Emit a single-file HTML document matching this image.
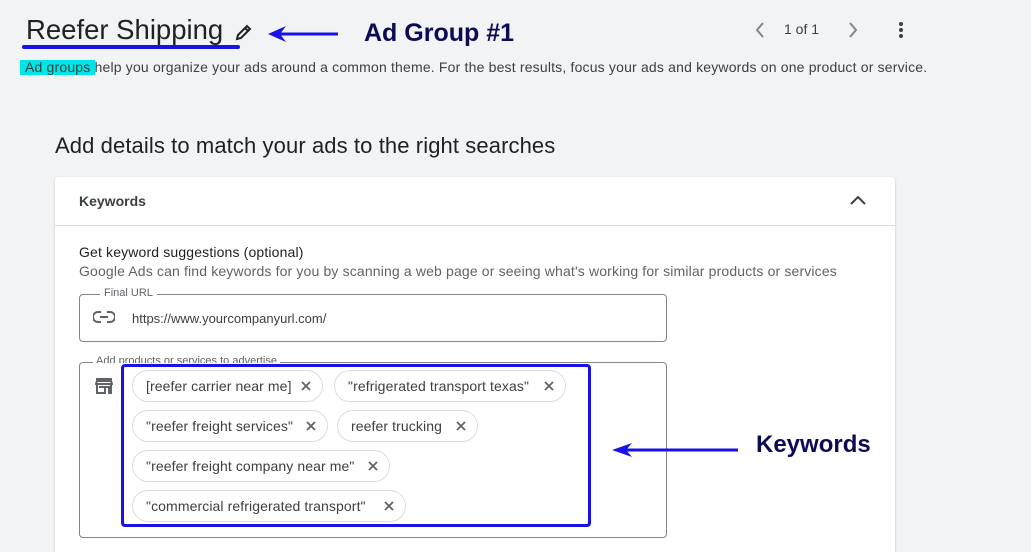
<!DOCTYPE html>
<html><head><style>
*{margin:0;padding:0;box-sizing:border-box}
html,body{width:1031px;height:552px;overflow:hidden}
body{background:#f1f3f4;font-family:"Liberation Sans",Arial,sans-serif;position:relative;color:#3c4043}
.a{position:absolute;white-space:nowrap}
.chip{position:absolute;height:32px;border:1px solid #dadce0;border-radius:16px;background:#fff;font-size:14px;color:#3c4043;line-height:30px;padding-left:13px;letter-spacing:.1px}
.chip .x{position:absolute;right:9px;top:8px;width:14px;height:14px}
</style></head><body>
<div class="a" style="left:26px;top:14px;font-size:27.5px;color:#202124">Reefer Shipping</div>
<div class="a" style="left:22px;top:45px;width:218px;height:4px;background:#1a10e8;border-radius:2px"></div>
<svg class="a" style="left:234px;top:22px" width="20" height="20" viewBox="0 0 20 20"><path d="M3 17 L4 13 L13 4 L16 7 L7 16 Z M11 6 L14 9" fill="none" stroke="#202124" stroke-width="2"/></svg>
<svg class="a" style="left:266px;top:24px" width="74" height="20" viewBox="0 0 74 20"><path d="M72 10 H12" stroke="#1a10e8" stroke-width="3"/><path d="M2 10 L20 2 L14 10 L20 18 Z" fill="#1a10e8"/></svg>
<div class="a" style="left:364px;top:19px;font-size:25px;font-weight:bold;color:#0c0c55">Ad Group #1</div>
<div class="a" style="left:20px;top:60px;width:75px;height:15px;background:#00e5e5"></div>
<div class="a" style="left:25px;top:59px;font-size:14px;letter-spacing:.18px;color:#3c4043">Ad groups help you organize your ads around a common theme. For the best results, focus your ads and keywords on one product or service.</div>
<svg class="a" style="left:753px;top:21px" width="14" height="18"><path d="M10 2 L4 9 L10 16" fill="none" stroke="#80868b" stroke-width="2"/></svg>
<div class="a" style="left:784px;top:21px;font-size:14px">1 of 1</div>
<svg class="a" style="left:846px;top:21px" width="14" height="18"><path d="M4 2 L10 9 L4 16" fill="none" stroke="#80868b" stroke-width="2"/></svg>
<svg class="a" style="left:896px;top:21px" width="10" height="18"><circle cx="5" cy="3" r="2" fill="#3c4043"/><circle cx="5" cy="9" r="2" fill="#3c4043"/><circle cx="5" cy="15" r="2" fill="#3c4043"/></svg>
<div class="a" style="left:55px;top:133px;font-size:22px;letter-spacing:.1px;color:#202124">Add details to match your ads to the right searches</div>
<div class="a" style="left:55px;top:177px;width:840px;height:380px;background:#fff;border-radius:4px;box-shadow:0 1px 2px rgba(60,64,67,.3)"></div>
<div class="a" style="left:79px;top:193px;font-size:14px;font-weight:bold;color:#3c4043">Keywords</div>
<svg class="a" style="left:849px;top:193px" width="18" height="14"><path d="M2 11 L9 4 L16 11" fill="none" stroke="#3c4043" stroke-width="2"/></svg>
<div class="a" style="left:55px;top:225px;width:840px;height:1px;background:#dadce0"></div>
<div class="a" style="left:79px;top:244px;font-size:14px;letter-spacing:.15px;color:#202124">Get keyword suggestions (optional)</div>
<div class="a" style="left:79px;top:263px;font-size:14px;letter-spacing:.15px;color:#5f6368">Google Ads can find keywords for you by scanning a web page or seeing what's working for similar products or services</div>
<div class="a" style="left:79px;top:294px;width:588px;height:48px;border:1px solid #80868b;border-radius:4px"></div>
<div class="a" style="left:100px;top:287px;font-size:11px;background:#fff;padding:0 4px;color:#5f6368">Final URL</div>
<svg class="a" style="left:93px;top:311px" width="22" height="12"><path d="M8 1 H5 A5 5 0 0 0 5 11 H8 M14 1 H17 A5 5 0 0 1 17 11 H14 M7 6 H15" fill="none" stroke="#5f6368" stroke-width="2"/></svg>
<div class="a" style="left:132px;top:311px;font-size:13px;color:#3c4043">https://www.yourcompanyurl.com/</div>
<div class="a" style="left:79px;top:362px;width:588px;height:176px;border:1px solid #80868b;border-radius:4px"></div>
<div class="a" style="left:93px;top:355px;font-size:11px;background:#fff;padding:0 3px;color:#5f6368;height:8px;overflow:hidden;line-height:12px">Add products or services to advertise</div>
<svg class="a" style="left:95px;top:378px" width="18" height="16"><path d="M1 1 H17 M1 6 H17 L16 3 H2 Z M2 6 V15 H10 V9 H14 V15 H16 V6 M4 9 H10" fill="none" stroke="#5f6368" stroke-width="2"/></svg>
<div class="chip" style="left:132px;top:370px;width:191px">[reefer carrier near me]<svg class="x" viewBox="0 0 14 14"><path d="M3 3 L11 11 M11 3 L3 11" stroke="#5f6368" stroke-width="1.8"/></svg></div>
<div class="chip" style="left:334px;top:370px;width:232px">"refrigerated transport texas"<svg class="x" viewBox="0 0 14 14"><path d="M3 3 L11 11 M11 3 L3 11" stroke="#5f6368" stroke-width="1.8"/></svg></div>
<div class="chip" style="left:132px;top:410px;width:196px">"reefer freight services"<svg class="x" viewBox="0 0 14 14"><path d="M3 3 L11 11 M11 3 L3 11" stroke="#5f6368" stroke-width="1.8"/></svg></div>
<div class="chip" style="left:337px;top:410px;width:141px">reefer trucking<svg class="x" viewBox="0 0 14 14"><path d="M3 3 L11 11 M11 3 L3 11" stroke="#5f6368" stroke-width="1.8"/></svg></div>
<div class="chip" style="left:132px;top:450px;width:258px">"reefer freight company near me"<svg class="x" viewBox="0 0 14 14"><path d="M3 3 L11 11 M11 3 L3 11" stroke="#5f6368" stroke-width="1.8"/></svg></div>
<div class="chip" style="left:132px;top:490px;width:274px">"commercial refrigerated transport"<svg class="x" viewBox="0 0 14 14"><path d="M3 3 L11 11 M11 3 L3 11" stroke="#5f6368" stroke-width="1.8"/></svg></div>
<div class="a" style="left:121px;top:364px;width:470px;height:163px;border:3px solid #1a10e8;border-radius:4px"></div>
<svg class="a" style="left:610px;top:440px" width="130" height="20" viewBox="0 0 130 20"><path d="M128 10 H14" stroke="#1a10e8" stroke-width="3"/><path d="M2 10 L22 3 L16 10 L22 17 Z" fill="#1a10e8"/></svg>
<div class="a" style="left:756px;top:431px;font-size:24px;font-weight:bold;color:#0c0c55">Keywords</div>
</body></html>
